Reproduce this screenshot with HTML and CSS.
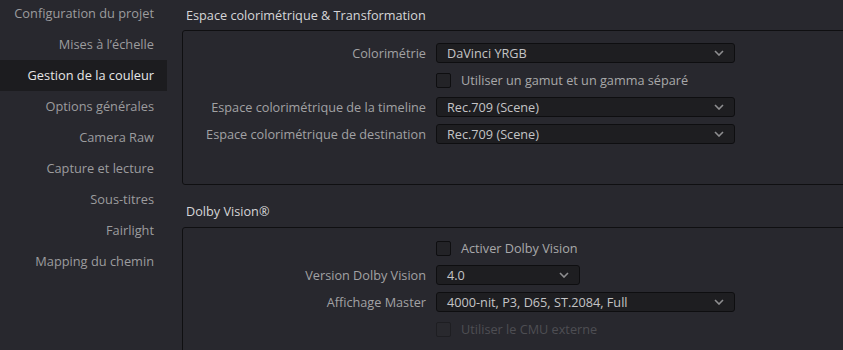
FILE: index.html
```html
<!DOCTYPE html>
<html lang="fr">
<head>
    <meta charset="UTF-8">
    <meta name="viewport" content="width=device-width, initial-scale=1.0">
    <title>Paramètres du projet</title>
    <link rel="stylesheet" href="styles.css">
</head>
<body>
    <div class="settings">
        <div class="sidebar">
            <div class="nav-item">Configuration du projet</div>
            <div class="nav-item">Mises à l’échelle</div>
            <div class="nav-item active">Gestion de la couleur</div>
            <div class="nav-item">Options générales</div>
            <div class="nav-item">Camera Raw</div>
            <div class="nav-item">Capture et lecture</div>
            <div class="nav-item">Sous-titres</div>
            <div class="nav-item">Fairlight</div>
            <div class="nav-item">Mapping du chemin</div>
        </div>

        <div class="content">
            <div class="section">
                <div class="section-title">Espace colorimétrique &amp; Transformation</div>
                <div class="panel panel-color">
                    <div class="row">
                        <div class="label">Colorimétrie</div>
                        <div class="select">DaVinci YRGB
                            <svg class="chevron" width="10" height="6" viewBox="0 0 10 6"><path d="M1 1 L5 5 L9 1" /></svg>
                        </div>
                    </div>
                    <div class="row">
                        <div class="label"></div>
                        <div class="check"><span class="box"></span>Utiliser un gamut et un gamma séparé</div>
                    </div>
                    <div class="row">
                        <div class="label">Espace colorimétrique de la timeline</div>
                        <div class="select">Rec.709 (Scene)
                            <svg class="chevron" width="10" height="6" viewBox="0 0 10 6"><path d="M1 1 L5 5 L9 1" /></svg>
                        </div>
                    </div>
                    <div class="row">
                        <div class="label">Espace colorimétrique de destination</div>
                        <div class="select">Rec.709 (Scene)
                            <svg class="chevron" width="10" height="6" viewBox="0 0 10 6"><path d="M1 1 L5 5 L9 1" /></svg>
                        </div>
                    </div>
                </div>
            </div>

            <div class="section">
                <div class="section-title">Dolby Vision®</div>
                <div class="panel panel-dolby">
                    <div class="row">
                        <div class="label"></div>
                        <div class="check"><span class="box"></span>Activer Dolby Vision</div>
                    </div>
                    <div class="row">
                        <div class="label">Version Dolby Vision</div>
                        <div class="select select-small">4.0
                            <svg class="chevron" width="10" height="6" viewBox="0 0 10 6"><path d="M1 1 L5 5 L9 1" /></svg>
                        </div>
                    </div>
                    <div class="row">
                        <div class="label">Affichage Master</div>
                        <div class="select">4000-nit, P3, D65, ST.2084, Full
                            <svg class="chevron" width="10" height="6" viewBox="0 0 10 6"><path d="M1 1 L5 5 L9 1" /></svg>
                        </div>
                    </div>
                    <div class="row">
                        <div class="label"></div>
                        <div class="check disabled"><span class="box"></span>Utiliser le CMU externe</div>
                    </div>
                </div>
            </div>
        </div>
    </div>
</body>
</html>
```

FILE: styles.css
```css
body {
    font-family: "Open Sans", "Noto Sans", sans-serif;
    font-size: 12.7px;
    background-color: #28282e;
    color: #a2a2a4;
    margin: 0;
    overflow: hidden;
}

.settings {
    display: flex;
    height: 350px;
    overflow: hidden;
}

/* left navigation */
.sidebar {
    width: 167px;
    flex-shrink: 0;
    margin-top: -2px;
}

.nav-item {
    height: 31px;
    line-height: 31px;
    text-align: right;
    padding-right: 13px;
    font-size: 12.8px;
    color: #9c9c9e;
}

.nav-item.active {
    background-color: #1c1c1f;
    color: #e6e6e6;
}

/* right side */
.content {
    flex: 1;
    padding-left: 15px;
    min-width: 0;
    overflow: hidden;
}

.section-title {
    color: #d6d6d8;
    line-height: 20px;
    padding: 5px 0 5px 4px;
}

.section + .section {
    margin-top: 11px;
}

.section + .section .section-title {
    padding-bottom: 6px;
}

.panel {
    width: 720px;
    border: 1px solid #0f0f11;
    border-radius: 3px;
    display: flex;
    flex-direction: column;
    gap: 7px;
}

.panel-color {
    padding: 12px 0 40px 0;
}

.panel-dolby {
    padding: 10px 0 20px 0;
}

.row {
    display: flex;
    align-items: center;
    gap: 10px;
    height: 20px;
}

.label {
    width: 243px;
    text-align: right;
    flex-shrink: 0;
    white-space: nowrap;
}

.select {
    width: 299px;
    height: 20px;
    box-sizing: border-box;
    background-color: #1e1e21;
    border: 1px solid #0e0e10;
    border-radius: 3px;
    color: #c4c4c6;
    padding-left: 10px;
    line-height: 18px;
    position: relative;
}

.select-small {
    width: 144px;
}

.chevron {
    position: absolute;
    right: 10px;
    top: 6px;
}

.chevron path {
    fill: none;
    stroke: #8e8e90;
    stroke-width: 1.6;
}

.check {
    display: flex;
    align-items: center;
    gap: 10px;
    color: #a8a8aa;
}

.box {
    width: 15px;
    height: 15px;
    box-sizing: border-box;
    background-color: #232327;
    border: 1px solid #0e0e10;
    border-radius: 2px;
}

.check.disabled {
    color: #4e4e53;
}

.check.disabled .box {
    background-color: #29292e;
    border-color: #1e1e22;
}
```
